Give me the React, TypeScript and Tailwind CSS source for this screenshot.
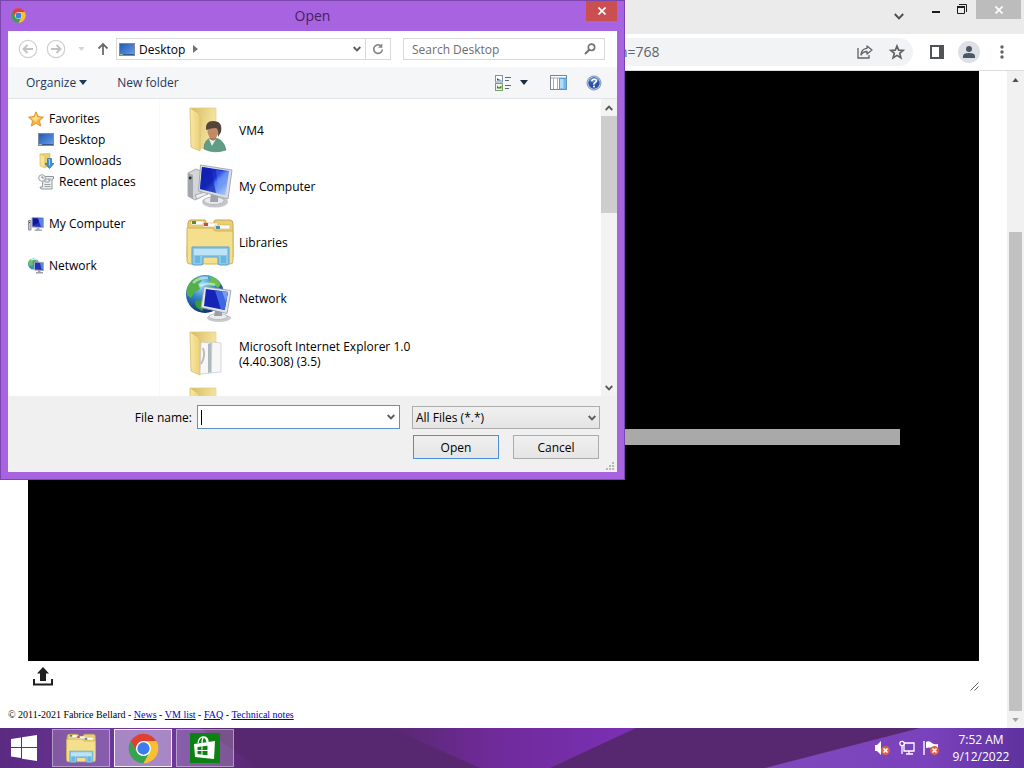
import React from "react";

type IconProps = { className?: string };

function ChromeLogo({ className }: IconProps) {
  return (
    <svg viewBox="0 0 48 48" className={className} aria-hidden="true">
      <circle cx="24" cy="24" r="14" fill="#fff" />
      <path d="M24 12.500H43.900A23 23 0 0 0 4.100 12.500L14.040 29.750A11.500 11.500 0 0 1 24 12.500z" fill="#e0402f" />
      <path d="M14.040 29.750L4.100 12.500A23 23 0 0 0 24 47L33.960 29.750A11.500 11.500 0 0 1 14.040 29.750z" fill="#35a351" />
      <path d="M33.960 29.750L24 47A23 23 0 0 0 43.900 12.500H24A11.500 11.500 0 0 1 33.960 29.750z" fill="#fbc02d" />
      <circle cx="24" cy="24" r="9.500" fill="#3b7ded" />
    </svg>
  );
}

function NavCircle({ flip }: { flip?: boolean }) {
  return (
    <svg viewBox="0 0 20 20" className="size-5" fill="none" aria-hidden="true">
      <circle cx="10" cy="10" r="8.700" stroke="#cfcfcf" strokeWidth="1.200" />
      <path
        d={flip ? "M5 10h9M10.500 6l4 4-4 4" : "M15 10H6M9.500 6l-4 4 4 4"}
        stroke="#c2c2c2"
        strokeWidth="1.900"
      />
    </svg>
  );
}

function UpArrow() {
  return (
    <svg viewBox="0 0 12 14" className="h-3.5 w-3" fill="none" stroke="#6b6b6b" strokeWidth="1.800" aria-hidden="true">
      <path d="M6 13V2M1.500 6.500L6 2l4.500 4.500" />
    </svg>
  );
}

function Chevron({ className }: IconProps) {
  return (
    <svg viewBox="0 0 8 6" className={className ?? "h-1.5 w-2"} fill="none" stroke="#5a5a5a" strokeWidth="1.800" aria-hidden="true">
      <path d="M0.700 1L4 4.400 7.300 1" />
    </svg>
  );
}

function Caret({ className }: IconProps) {
  return (
    <svg viewBox="0 0 8 5" className={className ?? "h-[5px] w-2"} aria-hidden="true">
      <path d="M0 0h8L4 5z" fill="currentColor" />
    </svg>
  );
}

function Refresh() {
  return (
    <svg viewBox="0 0 12 12" className="size-3" fill="none" aria-hidden="true">
      <path d="M8.500 2.600A4.300 4.300 0 1 0 10.300 6.500" stroke="#808080" strokeWidth="1.600" />
      <path d="M10.300 0.500v4.300H6z" fill="#808080" />
    </svg>
  );
}

function Magnifier() {
  return (
    <svg viewBox="0 0 12 12" className="size-3" fill="none" stroke="#707070" aria-hidden="true">
      <circle cx="7.500" cy="4.300" r="3.200" strokeWidth="1.600" />
      <path d="M5.200 6.800L1 11" strokeWidth="2" />
    </svg>
  );
}

function ViewModeIcon() {
  return (
    <svg viewBox="0 0 17 16" className="h-4 w-[17px]" fill="none" aria-hidden="true">
      <rect x="0.500" y="0.500" width="7" height="6.500" fill="#fff" stroke="#8093a8" />
      <path d="M2 5.500V3l2 1.500 2.500 0.500v0.500z" fill="#24508c" />
      <rect x="0.500" y="8.500" width="7" height="7" fill="#eef5e4" stroke="#7c9d65" />
      <path d="M2 13.500v-3l2 2 2.500-2v3z" fill="#487b35" />
      <path d="M10 2.500h6M10 5.500h4M10 10.500h6M10 13.500h4" stroke="#5b6979" />
    </svg>
  );
}

function PreviewPaneIcon() {
  return (
    <svg viewBox="0 0 17 15" className="h-[15px] w-[17px]" fill="none" aria-hidden="true">
      <rect x="0.500" y="0.500" width="16" height="14" fill="#fff" stroke="#7a8798" />
      <path d="M1 3h15" stroke="#a0aab6" />
      <path d="M3.500 3v11M7.500 3v11" stroke="#a8b0bb" />
      <rect x="9.500" y="3.500" width="6.500" height="10.500" fill="#b3dcfb" stroke="#4f9fdf" />
      <path d="M13.500 4v9.500h2V4z" fill="#6ab7f2" />
    </svg>
  );
}

function HelpIcon() {
  return (
    <svg viewBox="0 0 16 16" className="size-4" aria-hidden="true">
      <circle cx="8" cy="8" r="7" fill="#c5cfe0" stroke="#8694ad" />
      <circle cx="8" cy="8" r="5.700" fill="#2854ac" />
      <path d="M3 6a5.300 5.300 0 0 1 10 0q-5 3-10 0z" fill="#5e87cf" />
      <path d="M5.800 6.200Q6 4.200 8.200 4.200T10.300 6q0 1-1.300 1.800T8 9.800" fill="none" stroke="#fff" strokeWidth="1.600" />
      <rect x="7.100" y="10.700" width="1.800" height="1.700" fill="#fff" />
    </svg>
  );
}

function DesktopIcon() {
  return (
    <svg viewBox="0 0 16 13" className="h-[13px] w-4" aria-hidden="true">
      <defs>
        <linearGradient id="desk" x1="0" y1="0" x2="1" y2="1">
          <stop offset="0" stopColor="#2459a8" />
          <stop offset="0.600" stopColor="#4a83d6" />
          <stop offset="1" stopColor="#74a5e6" />
        </linearGradient>
      </defs>
      <rect x="0.500" y="0.500" width="15" height="12" fill="url(#desk)" stroke="#7c8da2" />
      <path d="M1 11.500h14" stroke="#35598e" />
      <path d="M1 11.500h3" stroke="#8cc39c" />
    </svg>
  );
}

function StarIcon() {
  return (
    <svg viewBox="0 0 16 16" className="size-4" aria-hidden="true">
      <path d="M8 0.800l2.200 4.800 5.200.6-3.900 3.500 1.100 5.300L8 12.300 3.400 15l1.100-5.300L.6 6.200l5.200-.6z" fill="#fbb83a" stroke="#d98a28" strokeWidth="0.900" />
      <path d="M8 3l1.300 3.500 3 .5-3 1.500L8 11 5.500 9 3.500 7l3-.5z" fill="#ffe08a" />
    </svg>
  );
}

function DownloadsIcon() {
  return (
    <svg viewBox="0 0 16 16" className="size-4" aria-hidden="true">
      <path d="M2 1l8-.5h2V14H6z" fill="#e9cf70" stroke="#d2b65c" strokeWidth="0.600" />
      <path d="M2 1l5 2v12l-5-2z" fill="#f7e391" stroke="#d2b65c" strokeWidth="0.600" />
      <path d="M9.500 5.500h4v5H16l-4.500 5-4.500-5h2.500z" fill="#3d93d8" stroke="#276ba7" strokeWidth="0.700" />
      <path d="M10.500 6.500h1v6" fill="none" stroke="#9cd3f8" />
    </svg>
  );
}

function RecentIcon() {
  return (
    <svg viewBox="0 0 16 16" className="size-4" fill="none" aria-hidden="true">
      <path d="M5 2.500h10.500V5H14v10H4q-2 0-2-2h2.500z" fill="#eceeee" stroke="#92999b" />
      <path d="M7 5h4v3H7zM6.500 10.500h6M6.500 12.500h6M12 4v3" stroke="#9aa3a6" />
      <circle cx="4" cy="4" r="3.300" fill="#f6f8f8" stroke="#9ca4a6" />
      <path d="M4 2v2h2" stroke="#6a7376" strokeWidth="0.800" />
    </svg>
  );
}

function SmallComputerIcon() {
  return (
    <svg viewBox="0 0 16 16" className="size-4" aria-hidden="true">
      <path d="M0.500 4.500h2.500V14H0.500z" fill="#c6c9cf" stroke="#8b9099" />
      <path d="M1.500 6v1" stroke="#3c4149" />
      <path d="M4 1.500l11.500 0.500v9.500L4 11z" fill="#2430b8" stroke="#a4adbd" />
      <path d="M10 2.500h5v8.500h-2z" fill="#5b83e6" />
      <path d="M5 2.500h5l1 4-6 3z" fill="#10189a" />
      <path d="M8.500 12h3v1.500h2.500v1.500H6.500v-1.500h2z" fill="#a6abb4" />
    </svg>
  );
}

function SmallNetworkIcon() {
  return (
    <svg viewBox="0 0 16 16" className="size-4" aria-hidden="true">
      <circle cx="5.500" cy="6" r="5.500" fill="#3d93bd" />
      <path d="M1 3q3-3 6-2L4.500 4 5 7 2 8 0.500 6zM8 1q2 1 2.500 3H8z" fill="#6cc25b" />
      <path d="M3 2q3-1.500 6 0" stroke="#d9f7f4" fill="none" />
      <path d="M6.500 4l9 0.500v8L6.500 12z" fill="#2430b8" stroke="#a4adbd" />
      <path d="M12 5h3v6.500h-1.500z" fill="#5b83e6" />
      <path d="M10 12.500h2.500v1.500H15v1.500H8V14h2z" fill="#9aa0aa" />
    </svg>
  );
}

function ComputerIcon({ className }: IconProps) {
  return (
    <svg viewBox="0 0 48 44" className={className} aria-hidden="true">
      <defs>
        <linearGradient id="screen" x1="0" y1="0" x2="1" y2="1">
          <stop offset="0" stopColor="#0d18b5" />
          <stop offset="0.450" stopColor="#1b32d0" />
          <stop offset="0.550" stopColor="#4e7df0" />
          <stop offset="1" stopColor="#bcd6ff" />
        </linearGradient>
      </defs>
      <path d="M2 9l8-4 5 2v26l-6 3-7-4z" fill="#d4d5d8" stroke="#9a9ca3" strokeWidth="0.800" />
      <path d="M2 9l5 2v24l-5-3z" fill="#a2a5ac" />
      <circle cx="4.200" cy="14" r="1.400" fill="#2a2d33" />
      <path d="M9 31l10-3 3 2-11 5z" fill="#ededf0" stroke="#9b9da3" strokeWidth="0.800" />
      <ellipse cx="29" cy="38" rx="13" ry="5.500" fill="#c4c6ca" />
      <ellipse cx="28" cy="36.700" rx="10" ry="3.800" fill="#e8e9ec" stroke="#a9abb1" strokeWidth="0.700" />
      <path d="M25 29l7 2v7h-8z" fill="#a0a3aa" />
      <path d="M14.500 1L46 6l-4 29-29.500-8z" fill="#d9dce1" stroke="#a0a3ab" strokeWidth="0.900" />
      <path d="M16 3l27 4-3.500 24.500L14 25z" fill="url(#screen)" />
      <path d="M16 3l9 1.500 5 24.500-16-4z" fill="#1020a9" opacity="0.650" />
      <path d="M30 6l12 2-1 7-9 8z" fill="#9ec0ff" opacity="0.220" />
    </svg>
  );
}

function NetworkIcon({ className }: IconProps) {
  return (
    <svg viewBox="0 0 48 48" className={className} aria-hidden="true">
      <defs>
        <radialGradient id="globe" cx="0.400" cy="0.250" r="0.750">
          <stop offset="0" stopColor="#a5e4f5" />
          <stop offset="0.450" stopColor="#3488cc" />
          <stop offset="1" stopColor="#103573" />
        </radialGradient>
      </defs>
      <circle cx="19" cy="20" r="19" fill="url(#globe)" />
      <path d="M2 12Q6 4 13 3l3 4-4 3 2 5-6 4-3 5-4-3q-1-5 1-9z" fill="#54af48" />
      <path d="M23 2q7 1 12 8l-3 4-4-3-4 2-2-4 3-3z" fill="#6dbe4b" />
      <path d="M9 27l6-1 4 5-3 6-6-4z" fill="#3c993c" />
      <path d="M7 9q7-6 15-5M14 12q6-4 15-1" stroke="#e2fcfa" strokeWidth="2.500" fill="none" opacity="0.550" />
      <ellipse cx="33" cy="44" rx="12" ry="4" fill="#c8cacd" />
      <ellipse cx="32" cy="42.500" rx="9" ry="3" fill="#ececef" stroke="#a7aab0" strokeWidth="0.600" />
      <path d="M29 36l7 1v5h-8z" fill="#9ba0a8" />
      <path d="M18 12.500l27 4-4 23-26-6z" fill="#e1e4e9" stroke="#8f9aac" strokeWidth="0.800" />
      <path d="M20 15l22 3-3.300 18L18 32z" fill="#1424b4" />
      <path d="M29 16.200l13 1.800-3.300 18-4-1z" fill="#3f66e2" />
      <path d="M36 17.200l6 0.800-2 10z" fill="#9dbdff" opacity="0.600" />
    </svg>
  );
}

function FolderShape() {
  return (
    <>
      <defs>
        <linearGradient id="folderBack" x1="0" y1="0" x2="1" y2="0.300">
          <stop offset="0" stopColor="#d9bb61" />
          <stop offset="1" stopColor="#f5e6a6" />
        </linearGradient>
        <linearGradient id="folderFront" x1="0" y1="0" x2="1" y2="0">
          <stop offset="0" stopColor="#f9e8a4" />
          <stop offset="1" stopColor="#edd07a" />
        </linearGradient>
      </defs>
      <path d="M5 2h25v37l-16 4z" fill="url(#folderBack)" stroke="#e3cd83" strokeWidth="0.700" />
      <path d="M4 2l8 5q2 1 2 3v35L5 41z" fill="url(#folderFront)" stroke="#dac073" strokeWidth="0.900" />
    </>
  );
}

function UserFolderIcon() {
  return (
    <svg viewBox="0 0 48 48" className="size-12" aria-hidden="true">
      <FolderShape />
      <path d="M18 43q0-10 8-11 11-1 14 12-12 4-22-1z" fill="#609d85" stroke="#477e69" strokeWidth="0.700" />
      <path d="M23 33l3 7 4-7z" fill="#e8f0e8" />
      <path d="M23 28h7v5q-3 3-6 0z" fill="#a87652" />
      <ellipse cx="27" cy="25" rx="5.500" ry="7.500" fill="#c08c66" />
      <path d="M20 24q-1-9 7-9 10 0 8 11l-3 5q1-8-2-9-5 0-10 2z" fill="#54443a" />
    </svg>
  );
}

function DocumentFolderIcon() {
  return (
    <svg viewBox="0 0 48 48" className="size-12" aria-hidden="true">
      <FolderShape />
      <path d="M15 12l10 1v30l-11 1zM26 12l9 1v29l-10 1z" fill="#f7f7f8" stroke="#c4c6ca" strokeWidth="0.700" />
      <path d="M22 14l3-1v29l-3 1z" fill="#aeb9be" />
      <path d="M17 18q3 8-2 16" stroke="#c1bcb4" strokeWidth="2" fill="none" />
    </svg>
  );
}

function LibrariesIcon({ className }: IconProps) {
  return (
    <svg viewBox="0 0 48 48" className={className} aria-hidden="true">
      <path d="M2 5q0-3 3-3h14l2 4h7V4q0-2 2-2h14q3 0 3 4v33H1z" fill="#e9ce72" stroke="#c6a653" />
      <path d="M5 3h13v4H5zM17 5h15v4H17zM29 7h15v4H29z" fill="#fff" stroke="#d2b467" strokeWidth="0.600" />
      <path d="M6 3h4v3H6z" fill="#588947" />
      <path d="M18 5h4v3h-4z" fill="#cb4936" />
      <path d="M30 8h4v3h-4z" fill="#4d8ea5" />
      <path d="M1 10h25l3 3h18v30q0 3-3 3H4q-3 0-3-3z" fill="#f4df8c" stroke="#d2b25b" />
      <path d="M6 29h37v16q0 2-2 2h-7q-2 0-2-2v-6H17v6q0 2-2 2H8q-2 0-2-2z" fill="#8bc9eb" stroke="#5a9fcb" />
      <path d="M8 31h33v6H8z" fill="#bde3f4" />
      <path d="M9 38h5v7H9zM35 38h5v7h-5z" fill="#6cb5e1" />
    </svg>
  );
}

const places = [
  { label: "Desktop", icon: <DesktopIcon /> },
  { label: "Downloads", icon: <DownloadsIcon /> },
  { label: "Recent places", icon: <RecentIcon /> },
];

const entries = [
  { label: "VM4", icon: <UserFolderIcon /> },
  { label: "My Computer", icon: <ComputerIcon className="h-11 w-12" /> },
  { label: "Libraries", icon: <LibrariesIcon className="size-12" /> },
  { label: "Network", icon: <NetworkIcon className="size-12" /> },
  { label: "Microsoft Internet Explorer 1.0 (4.40.308) (3.5)", icon: <DocumentFolderIcon /> },
  { label: "", icon: <DocumentFolderIcon /> },
];

function OpenDialog() {
  return (
    <section
      role="dialog"
      aria-label="Open"
      className="absolute top-0 left-0 flex w-[625px] flex-col border border-[#7b45ad] bg-[#a864e0] px-[7px] pb-[7px] text-xs leading-[15px] text-black"
    >
      <header className="relative flex h-[30px] items-center justify-center">
        <ChromeLogo className="absolute top-[7px] left-[3px] size-[15px]" />
        <h1 className="text-sm text-[#46205f]">Open</h1>
        <button aria-label="Close" className="absolute top-0 right-0 flex h-5 w-[31px] items-center justify-center bg-[#c94f50]">
          <svg viewBox="0 0 8 8" className="size-2" stroke="#fff" strokeWidth="1.600" aria-hidden="true">
            <path d="M0.500 0.500l7 7M7.500 0.500l-7 7" />
          </svg>
        </button>
      </header>

      <div className="flex flex-col bg-white">
        <div className="flex h-[36px] items-center pr-3 pl-[10px]">
          <button aria-label="Back"><NavCircle /></button>
          <button aria-label="Forward" className="ml-2"><NavCircle flip /></button>
          <button aria-label="Recent locations" className="ml-3 text-[#d5d5d5]"><Caret className="h-1 w-[7px]" /></button>
          <button aria-label="Up" className="ml-3"><UpArrow /></button>
          <div className="ml-[7px] flex h-[22px] flex-1 items-center border border-[#d9d9d9] pl-[2px]">
            <DesktopIcon />
            <span className="ml-1">Desktop</span>
            <svg viewBox="0 0 5 8" className="ml-2 h-2 w-[5px]" aria-hidden="true"><path d="M0 0l5 4-5 4z" fill="#707070" /></svg>
            <button aria-label="Previous locations" className="ml-auto flex h-full w-[17px] items-center justify-center"><Chevron /></button>
            <button aria-label="Refresh" className="flex h-full w-[25px] items-center justify-center border-l border-[#d9d9d9]"><Refresh /></button>
          </div>
          <label className="ml-3 flex h-[22px] w-[202px] items-center border border-[#d9d9d9] px-2">
            <input aria-label="Search Desktop" placeholder="Search Desktop" className="min-w-0 flex-1 bg-transparent outline-none placeholder:text-[#6d6d6d]" />
            <Magnifier />
          </label>
        </div>

        <div className="flex h-8 items-center border-b border-[#e3e6e9] bg-[#f5f6f7] pr-[15px] pl-[18px] text-[#1e395b]">
          <button className="flex items-center gap-[3px]">Organize <Caret /></button>
          <button className="ml-[30px]">New folder</button>
          <button aria-label="Change your view" className="ml-auto"><ViewModeIcon /></button>
          <button aria-label="More view options" className="ml-2 text-[#1d2c40]"><Caret /></button>
          <button aria-label="Show the preview pane" className="ml-[22px]"><PreviewPaneIcon /></button>
          <button aria-label="Help" className="ml-[19px]"><HelpIcon /></button>
        </div>

        <div className="flex h-[297px] overflow-hidden">
          <nav aria-label="Places" className="w-[152px] border-r border-[#fafafa] pt-[9px] pl-5">
            <a href="#favorites" className="flex h-[21px] items-center gap-[5px]"><StarIcon />Favorites</a>
            <ul className="pl-[10px]">
              {places.map((place) => (
                <li key={place.label}>
                  <a href="#place" className="flex h-[21px] items-center gap-[5px]">{place.icon}{place.label}</a>
                </li>
              ))}
            </ul>
            <a href="#computer" className="mt-[21px] flex h-[21px] items-center gap-[5px]"><SmallComputerIcon />My Computer</a>
            <a href="#network" className="mt-[21px] flex h-[21px] items-center gap-[5px]"><SmallNetworkIcon />Network</a>
          </nav>
          <ul className="flex-1 pt-[3px] pl-[26px]">
            {entries.map((entry, index) => (
              <li key={index} className="flex h-14 items-center gap-[5px]">
                {entry.icon}
                <span className="w-[180px]">{entry.label}</span>
              </li>
            ))}
          </ul>
          <div className="flex w-4 flex-col items-center bg-[#f3f3f3]">
            <div className="flex h-[17px] items-center"><Chevron className="h-1.5 w-2 rotate-180" /></div>
            <div className="h-[97px] w-full bg-[#cdcdcd]" />
            <div className="mt-auto flex h-[17px] items-center"><Chevron /></div>
          </div>
        </div>

        <form className="relative flex flex-col gap-1.5 bg-[#f0f0f0] pt-[9px] pr-[17px] pb-[13px]" onSubmit={(event) => event.preventDefault()}>
          <div className="flex items-center justify-end">
            <label htmlFor="file-name" className="mr-[5px]">File name:</label>
            <div className="flex h-6 w-[203px] items-center border border-[#5c93c4] bg-white pl-[3px]">
              <span className="h-[15px] w-px bg-black" />
              <input id="file-name" className="min-w-0 flex-1 bg-transparent outline-none" />
              <button type="button" aria-label="Recent file names" className="flex h-full w-4 items-center justify-center"><Chevron /></button>
            </div>
            <div className="relative ml-3 w-[188px]">
              <select aria-label="File type" className="h-[23px] w-full appearance-none border border-[#acacac] bg-linear-to-b from-[#f0f0f0] to-[#e5e5e5] pl-[3px] outline-none">
                <option>All Files (*.*)</option>
              </select>
              <Chevron className="pointer-events-none absolute top-[9px] right-1 h-1.5 w-2" />
            </div>
          </div>
          <div className="flex justify-end gap-[14px] pr-px">
            <button type="submit" className="h-6 w-[86px] border border-[#4a90d9] bg-linear-to-b from-[#f0f0f0] to-[#e5e5e5]">Open</button>
            <button type="button" className="h-6 w-[86px] border border-[#acacac] bg-linear-to-b from-[#f0f0f0] to-[#e5e5e5]">Cancel</button>
          </div>
          <svg viewBox="0 0 8 8" className="absolute right-[3px] bottom-[2px] size-2" fill="#b8b8b8" aria-hidden="true">
            <path d="M6 0h2v2H6zM3 3h2v2H3zM6 3h2v2H6zM0 6h2v2H0zM3 6h2v2H3zM6 6h2v2H6z" />
          </svg>
        </form>
      </div>
    </section>
  );
}

function BrowserChrome() {
  return (
    <header>
      <div className="flex h-[34px] items-start justify-end bg-[#ebebeb] pr-[3px]">
        <button aria-label="Search tabs" className="mt-[13px] mr-7">
          <svg viewBox="0 0 10 7" className="h-[7px] w-[10px]" fill="none" stroke="#4a4c50" strokeWidth="1.900" aria-hidden="true"><path d="M0.800 1L5 5.300 9.200 1" /></svg>
        </button>
        <button aria-label="Minimize" className="mt-[11px] mr-[17px] h-[2px] w-2 bg-[#1c1c1c]" />
        <button aria-label="Restore" className="mt-1 mr-[9px]">
          <svg viewBox="0 0 10 10" className="size-[10px]" fill="none" stroke="#1c1c1c" aria-hidden="true"><path d="M2 0.500h7.500V8" /><path d="M0 3h8" strokeWidth="2" /><path d="M0.500 3v6.500h7V3" /></svg>
        </button>
        <button aria-label="Close browser" className="flex h-[19px] w-[45px] items-center justify-center bg-[#bcbcbc]">
          <svg viewBox="0 0 8 8" className="size-2" stroke="#fff" strokeWidth="1.600" aria-hidden="true"><path d="M0.500 0.500l7 7M7.500 0.500l-7 7" /></svg>
        </button>
      </div>
      <div className="flex h-[37px] items-center border-b border-[#d9dbde] bg-white pr-5 text-[#5f6368]">
        <div className="flex h-7 flex-1 items-center rounded-r-full bg-[#f1f3f4] pr-2">
          <input aria-label="Address" defaultValue="n=768" className="min-w-0 flex-1 bg-transparent pl-[619px] font-['Open_Sans',sans-serif] text-sm outline-none" />
          <button aria-label="Share" className="mr-4">
            <svg viewBox="0 0 16 14" className="h-3.5 w-4" fill="none" stroke="currentColor" strokeWidth="1.300" aria-hidden="true">
              <path d="M1 3v10h11v-3" />
              <path d="M10 1l5 4-5 4V6.500Q6 6.500 4 10q0-6 6-6.700z" strokeLinejoin="round" />
            </svg>
          </button>
          <button aria-label="Bookmark">
            <svg viewBox="0 0 16 16" className="size-4" fill="none" stroke="currentColor" strokeWidth="1.700" aria-hidden="true">
              <path d="M8 2l1.700 4.200 4.500.3-3.500 2.900 1.200 4.400L8 11.400l-3.900 2.400 1.200-4.400L1.800 6.500l4.500-.3z" />
            </svg>
          </button>
        </div>
        <button aria-label="Side panel" className="ml-[17px]">
          <svg viewBox="0 0 14 14" className="size-3.5" aria-hidden="true"><rect x="1" y="1" width="12" height="12" fill="none" stroke="#505358" strokeWidth="2" /><path d="M9 0h5v14H9z" fill="#505358" /></svg>
        </button>
        <button aria-label="Profile" className="ml-[14px] flex size-[22px] items-center justify-center rounded-full bg-[#dde1e6]">
          <svg viewBox="0 0 14 14" className="size-3.5" fill="#4a5866" aria-hidden="true"><circle cx="7" cy="4" r="3" /><path d="M1 13v-2q0-3 6-3t6 3v2z" /></svg>
        </button>
        <button aria-label="Menu" className="ml-5">
          <svg viewBox="0 0 4 14" className="h-3.5 w-1" fill="currentColor" aria-hidden="true"><circle cx="2" cy="2" r="1.700" /><circle cx="2" cy="7" r="1.700" /><circle cx="2" cy="12" r="1.700" /></svg>
        </button>
      </div>
    </header>
  );
}

function WebPage() {
  return (
    <div className="flex flex-1">
      <main className="flex flex-1 flex-col">
        <div className="mx-7 flex min-h-[590px] flex-1 flex-col bg-black pt-[358px] pr-[79px]">
          <div className="h-4 bg-[#a9a9a9]" />
        </div>
        <div className="mx-7 flex h-[30px] items-center justify-between pl-[5px]">
          <button aria-label="Upload">
            <svg viewBox="0 0 20 19" className="h-[19px] w-5" fill="#1f1f1f" aria-hidden="true">
              <path d="M10 0l6 6.500h-3V14H7V6.500H4z" /><path d="M1 12v5.500h18V12" fill="none" stroke="#1f1f1f" strokeWidth="2" />
            </svg>
          </button>
          <svg viewBox="0 0 9 9" className="size-[9px] self-end" stroke="#606060" aria-hidden="true"><path d="M0.500 8.500l8-8M4.500 8.500l4-4" /></svg>
        </div>
        <footer className="px-2 pt-[18px] pb-[7px] font-['Liberation_Serif',serif] text-[10px] leading-3 text-black">
          © 2011-2021 Fabrice Bellard -{" "}
          <a href="#news" className="text-[#0000c0] underline">News</a> -{" "}
          <a href="#vms" className="text-[#0000c0] underline">VM list</a> -{" "}
          <a href="#faq" className="text-[#0000c0] underline">FAQ</a> -{" "}
          <a href="#tech" className="text-[#0000c0] underline">Technical notes</a>
        </footer>
      </main>
      <div className="flex w-[17px] flex-col items-center bg-[#f1f1f1]">
        <div className="flex h-[17px] items-center text-[#505050]"><Caret className="h-1 w-[7px] rotate-180" /></div>
        <div className="mt-36 w-[13px] flex-1 bg-[#c1c1c1]" />
        <div className="flex h-[17px] items-center text-[#a0a0a0]"><Caret className="h-1 w-[7px]" /></div>
      </div>
    </div>
  );
}

function StoreIcon() {
  return (
    <svg viewBox="0 0 30 30" className="size-[30px]" aria-hidden="true">
      <path d="M0 0h30v30H0z" fill="#0b8212" />
      <path d="M8 10q1-6 5-6 3 0 4 5M12 10q0-6 3-6 3 1 3 5" fill="none" stroke="#fff" strokeWidth="1.300" />
      <path d="M4 11l21-3-1 18-19-2z" fill="#fff" />
      <path d="M7.500 14l4-.5V17h-4zM12.500 13.300l5-.6V17h-5zM7.500 18h4v3.500l-4-.5zM12.500 18h5v4.300l-5-.6z" fill="#0b8212" />
    </svg>
  );
}

function ErrorBadge() {
  return (
    <>
      <circle cx="11.500" cy="10.500" r="4.500" fill="#dc6248" />
      <path d="M9.500 8.500l4 4M13.500 8.500l-4 4" stroke="#fff" strokeWidth="1.600" />
    </>
  );
}

function Taskbar() {
  return (
    <footer className="relative isolate flex h-10 items-center bg-[#57286f] text-white">
      <svg viewBox="0 0 1024 40" preserveAspectRatio="none" className="absolute inset-0 -z-10 size-full" aria-hidden="true">
        <defs>
          <linearGradient id="left" x1="0" y1="0" x2="1" y2="0">
            <stop offset="0" stopColor="#5b2a80" /><stop offset="0.600" stopColor="#7139a3" /><stop offset="1" stopColor="#57286f" />
          </linearGradient>
          <linearGradient id="middle" x1="0" y1="0" x2="1" y2="0">
            <stop offset="0" stopColor="#57286f" /><stop offset="0.400" stopColor="#6f2a98" /><stop offset="1" stopColor="#7b30b5" />
          </linearGradient>
          <linearGradient id="right" x1="0" y1="0" x2="1" y2="0">
            <stop offset="0" stopColor="#8249bd" /><stop offset="0.650" stopColor="#7941bb" /><stop offset="1" stopColor="#5e329f" />
          </linearGradient>
        </defs>
        <path d="M0 0h200l60 40H0z" fill="url(#left)" />
        <path d="M390 0h246l-86 40h-70z" fill="url(#middle)" />
        <path d="M765 40L920 0h104v40z" fill="url(#right)" />
      </svg>
      <button aria-label="Start" className="ml-[10px]">
        <svg viewBox="0 0 27 26" className="h-[26px] w-[27px]" fill="#fff" aria-hidden="true"><path d="M1 4l10-1.500V12H1zM12 2.300L27 0v12H12zM1 13h10v10L1 21.500zM12 13h15v13l-15-2.300z" /></svg>
      </button>
      <div className="ml-[15px] flex h-full gap-1 py-px">
        <button aria-label="File Explorer" className="flex w-[58px] items-center justify-center border border-white/40 bg-white/20"><LibrariesIcon className="h-[30px] w-[34px]" /></button>
        <button aria-label="Google Chrome" className="flex w-[58px] items-center justify-center border border-white/85 bg-white/40"><ChromeLogo className="size-[31px]" /></button>
        <button aria-label="Store" className="flex w-[58px] items-center justify-center border border-white/40 bg-white/20"><StoreIcon /></button>
      </div>
      <div className="ml-auto flex items-center gap-2">
        <svg viewBox="0 0 17 16" className="h-4 w-[17px]" aria-hidden="true"><path d="M1 5h2l4-4v14l-4-4H1z" fill="#fff" /><ErrorBadge /></svg>
        <svg viewBox="0 0 16 16" className="size-4" fill="none" stroke="#fff" strokeWidth="1.300" aria-hidden="true"><path d="M5 3h10v8H5zM10 11v3M7 14h7M3 6v8" /><circle cx="3" cy="3.500" r="2.200" fill="#6d39a8" /></svg>
        <svg viewBox="0 0 17 16" className="h-4 w-[17px]" aria-hidden="true"><path d="M1 1v14" stroke="#fff" strokeWidth="1.400" /><path d="M3 2q3-2 6 1 2 2 6 1v4q-3 1-6 0-3-1-6 0z" fill="#fff" /><ErrorBadge /></svg>
      </div>
      <time className="mr-3 ml-[10px] w-[62px] text-center text-xs leading-[17px]">7:52 AM<br />9/12/2022</time>
    </footer>
  );
}

export default function App() {
  return (
    <div className="relative flex min-h-screen flex-col bg-white font-['Open_Sans',sans-serif]">
      <BrowserChrome />
      <WebPage />
      <OpenDialog />
      <Taskbar />
    </div>
  );
}
